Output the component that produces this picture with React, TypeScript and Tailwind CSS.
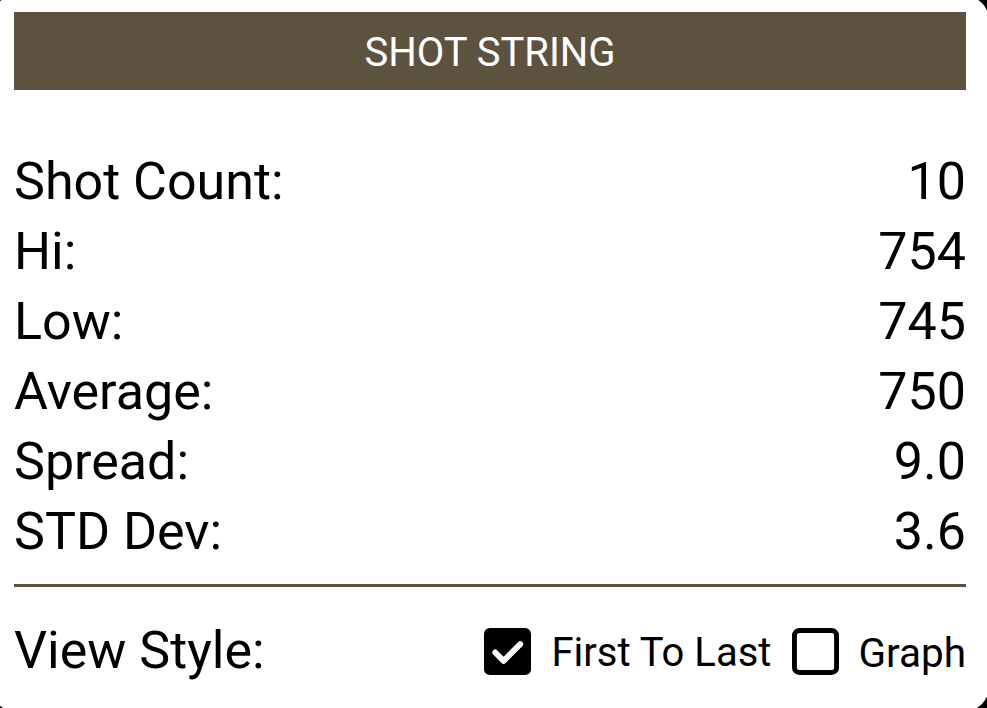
import React from "react";

const stats: [string, string][] = [
  ["Shot Count:", "10"],
  ["Hi:", "754"],
  ["Low:", "745"],
  ["Average:", "750"],
  ["Spread:", "9.0"],
  ["STD Dev:", "3.6"],
];

function CheckBox({ checked }: { checked: boolean }) {
  return (
    <svg width="47" height="47" viewBox="0 0 48 48" className="shrink-0">
      {checked ? (
        <>
          <rect x="0" y="0" width="48" height="48" rx="6" fill="#000" />
          <path d="M11.5 25 L20 33.5 L37 16.5" fill="none" stroke="#fff" strokeWidth="6" strokeLinecap="round" strokeLinejoin="round" />
        </>
      ) : (
        <rect x="2.5" y="2.5" width="43" height="43" rx="5" fill="none" stroke="#000" strokeWidth="5" />
      )}
    </svg>
  );
}

export default function App() {
  return (
    <div className="w-[987px] h-[708px] bg-black overflow-hidden" style={{ fontFamily: "Roboto, 'Noto Sans', sans-serif" }}>
      <div className="-ml-[9px] -mt-[4px] w-[998px] h-[715px] bg-white rounded-[24px] pt-[16px] px-[23px] flex flex-col">
        {/* Header */}
        <div className="h-[78px] bg-[#5d523f] flex items-center justify-center pt-[3px]">
          <span className="text-[40px] text-white leading-none">SHOT STRING</span>
        </div>

        {/* Stats */}
        <div className="mt-[57px] flex flex-col">
          {stats.map(([label, value]) => (
            <div key={label} className="h-[70px] flex items-center justify-between text-[52px] text-black leading-none">
              <span>{label}</span>
              <span>{value}</span>
            </div>
          ))}
        </div>

        <div className="mt-[17px] h-[3px] bg-[#5d523f]" />

        {/* View style */}
        <div className="mt-[24px] h-[80px] flex items-center justify-between text-black">
          <span className="text-[52px] leading-none">View Style:</span>
          <div className="flex items-center">
            <CheckBox checked />
            <span className="ml-[20px] text-[40px] leading-none pt-[4px]">First To Last</span>
            <span className="ml-[21px]"><CheckBox checked={false} /></span>
            <span className="ml-[19px] text-[40.5px] leading-none pt-[4px]">Graph</span>
          </div>
        </div>
      </div>
    </div>
  );
}
